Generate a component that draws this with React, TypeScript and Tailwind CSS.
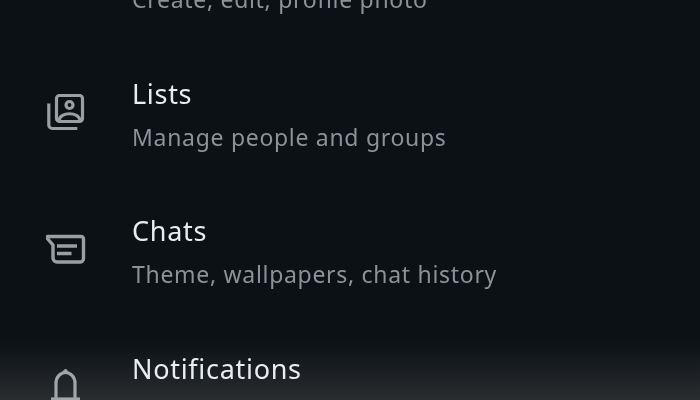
const rows = [
  { title: 'Profile', sub: 'Create, edit, profile photo', icon: null },
  { title: 'Lists', sub: 'Manage people and groups', icon: 'lists' },
  { title: 'Chats', sub: 'Theme, wallpapers, chat history', icon: 'chats' },
  { title: 'Notifications', sub: 'Messages, groups & call tones', icon: 'bell' },
];

function RowIcon({ name }: { name: string | null }) {
  if (name === 'lists') {
    return (
      <svg width="40" height="40" viewBox="0 0 40 40" fill="none" stroke="#98a0a4" strokeWidth="3.2">
        <rect x="10.5" y="1.500" width="26" height="26" rx="3" />
        <circle cx="23.500" cy="11" r="3.500" />
        <path d="M13 26.500c1-9 20-9 21 0" />
        <path d="M2.800 9.500v21.500a3.500 3.500 0 0 0 3.500 3.500h25" />
      </svg>
    );
  }
  if (name === 'chats') {
    return (
      <svg width="40" height="40" viewBox="0 0 40 40" fill="none" stroke="#98a0a4" strokeWidth="3.400">
        <path d="M2 4.500h33a2.500 2.500 0 0 1 2.500 2.500v19.500a3.500 3.500 0 0 1-3.500 3.500H11a4 4 0 0 1-4-4V13L1 6a1 1 0 0 1 1-1.500z" strokeLinejoin="round" />
        <path d="M11 14h20M11 21.500h14.500" />
      </svg>
    );
  }
  if (name === 'bell') {
    return (
      <svg width="40" height="40" viewBox="0 0 40 40" fill="none" stroke="#a0a6aa" strokeWidth="3.200">
        <path d="M10 30V14a9.500 10.500 0 0 1 19 0v16" />
        <path d="M19.500 4l-2.500-1.500 2.500-2.500 2.500 2.500z" fill="#a0a6aa" strokeWidth="1" />
        <path d="M5 30h29" />
      </svg>
    );
  }
  return <div className="w-10 h-10" />;
}

export default function App() {
  return (
    <div className="w-[700px] h-[400px] overflow-hidden bg-gradient-to-b from-[#0b1115] from-[85%] to-[#2a2d30] font-['Noto_Sans',sans-serif]">
      <div className="flex flex-col mt-[-91px] pl-[46px] will-change-transform">
        {rows.map((row) => (
          <div key={row.title} className="flex items-center h-[137.5px] shrink-0">
            <div className="w-[86px] shrink-0 pb-[2px]">
              <RowIcon name={row.icon} />
            </div>
            <div className="flex flex-col gap-[5px]">
              <div className="text-[27px] leading-[38px] tracking-[0.7px] text-[#e9edef]">{row.title}</div>
              <div className="text-[23px] leading-[38px] tracking-[0.7px] text-[#8b9397]">{row.sub}</div>
            </div>
          </div>
        ))}
      </div>
    </div>
  );
}
